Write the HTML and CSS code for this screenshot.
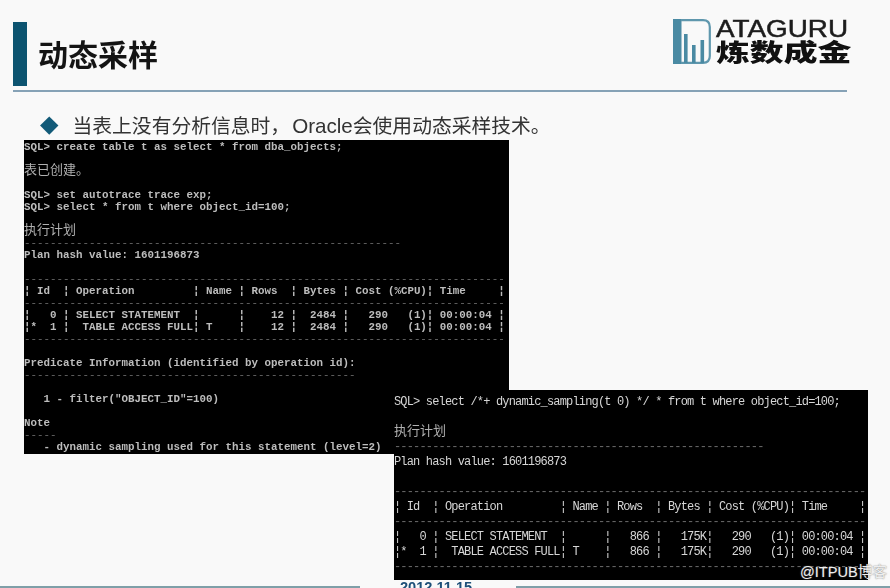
FILE: index.html
```html
<!DOCTYPE html>
<html lang="zh">
<head>
<meta charset="utf-8">
<title>动态采样</title>
<link rel="stylesheet" href="styles.css">
</head>
<body>
<main class="slide">
  <header class="head">
    <div class="accent"></div>
    <h1 class="title">动态采样</h1>
    <div class="logo">
      <svg class="logo-mark" width="38" height="45" viewBox="0 0 38 45">
        <rect x="0" y="0" width="8.5" height="45" fill="#4a8aa3"/>
        <path d="M8 1.2H30Q36.8 1.2 36.8 8V37Q36.8 43.8 30 43.8H8" fill="none" stroke="#5f97ad" stroke-width="2.2"/>
        <rect x="11" y="15" width="3.6" height="29" fill="#4a8aa3"/>
        <rect x="19" y="26" width="3.6" height="18" fill="#4a8aa3"/>
        <rect x="27.5" y="21" width="3.6" height="23" fill="#4a8aa3"/>
      </svg>
      <div class="logo-words">
        <span class="logo-en">ATAGURU</span>
        <span class="logo-cn">炼数成金</span>
      </div>
    </div>
  </header>
  <div class="rule"></div>
  <div class="point">
    <span class="diamond"></span>
    <p class="point-text">当表上没有分析信息时<span class="comma">，</span><span class="latin">Oracle</span>会使用动态采样技术。</p>
  </div>
  <pre class="term term-a">SQL&gt; create table t as select * from dba_objects;

<span class="cjk">表已创建。</span>

SQL&gt; set autotrace trace exp;
SQL&gt; select * from t where object_id=100;

<span class="cjk">执行计划</span>
<span class="dim">----------------------------------------------------------</span>
Plan hash value: 1601196873

<span class="dim">--------------------------------------------------------------------------</span>
¦ Id  ¦ Operation         ¦ Name ¦ Rows  ¦ Bytes ¦ Cost (%CPU)¦ Time     ¦
<span class="dim">--------------------------------------------------------------------------</span>
¦   0 ¦ SELECT STATEMENT  ¦      ¦    12 ¦  2484 ¦   290   (1)¦ 00:00:04 ¦
¦*  1 ¦  TABLE ACCESS FULL¦ T    ¦    12 ¦  2484 ¦   290   (1)¦ 00:00:04 ¦
<span class="dim">--------------------------------------------------------------------------</span>

Predicate Information (identified by operation id):
<span class="dim">---------------------------------------------------</span>

   1 - filter("OBJECT_ID"=100)

Note
<span class="dim">-----</span>
   - dynamic sampling used for this statement (level=2)</pre>
  <pre class="term term-b">SQL&gt; select /*+ dynamic_sampling(t 0) */ * from t where object_id=100;

<span class="cjk">执行计划</span>
<span class="dim">----------------------------------------------------------</span>
Plan hash value: 1601196873

<span class="dim">--------------------------------------------------------------------------</span>
¦ Id  ¦ Operation         ¦ Name ¦ Rows  ¦ Bytes ¦ Cost (%CPU)¦ Time     ¦
<span class="dim">--------------------------------------------------------------------------</span>
¦   0 ¦ SELECT STATEMENT  ¦      ¦   866 ¦   175K¦   290   (1)¦ 00:00:04 ¦
¦*  1 ¦  TABLE ACCESS FULL¦ T    ¦   866 ¦   175K¦   290   (1)¦ 00:00:04 ¦
<span class="dim">--------------------------------------------------------------------------</span></pre>
  <footer class="foot">
    <div class="foot-line foot-left"></div>
    <span class="date">2012.11.15</span>
    <div class="foot-line foot-right"></div>
  </footer>
  <span class="mark">@ITPUB博客</span>
</main>
</body>
</html>
```
FILE: styles.css
```css
* { box-sizing: border-box; }
html, body { margin: 0; padding: 0; }
body { width: 890px; height: 588px; overflow: hidden; background: #f9f9f9; }

.slide {
  position: relative;
  width: 890px;
  height: 588px;
  overflow: hidden;
  display: flex;
  flex-direction: column;
  background: #f9f9f9;
  font-family: "Liberation Sans", "Noto Sans CJK SC", sans-serif;
}

.head {
  display: flex;
  align-items: flex-start;
  height: 85px;
  padding: 19px 39px 0 13px;
  filter: blur(0.4px);
}
.accent { width: 14px; height: 64px; margin-top: 3px; background: #0c5470; }
.title {
  margin: 16px 0 0 11px;
  font: 700 30px/36px "Noto Sans CJK SC", sans-serif;
  color: #141414;
}
.logo { display: flex; gap: 5px; margin-left: auto; }
.logo-mark { flex: none; }
.logo-words { display: flex; flex-direction: column; width: 135px; }
.logo-en {
  display: block;
  font: 400 24px/20px "Liberation Sans", sans-serif;
  color: #1c1c1c;
  -webkit-text-stroke: 0.5px #1c1c1c;
  white-space: nowrap;
  transform: scaleX(1.16);
  transform-origin: left center;
}
.logo-cn {
  display: block;
  font: 900 24px/24px "Noto Sans CJK SC", sans-serif;
  color: #111;
  white-space: nowrap;
  transform: scaleX(1.41);
  transform-origin: left center;
}

.rule { height: 2px; margin: 5px 43px 0 13px; background: #86a2b6; }

.point {
  display: flex;
  align-items: center;
  height: 30px;
  margin: 18px 0 0 41px;
  gap: 15px;
  filter: blur(0.3px);
}
.diamond {
  width: 12.5px;
  height: 12.5px;
  margin: 0 2px;
  background: #125a78;
  transform: rotate(45deg);
}
.point-text {
  margin: 1px 0 0;
  font: 400 19.8px/30px "Liberation Sans", "Noto Sans CJK SC", sans-serif;
  color: #333;
  white-space: nowrap;
}
.comma { font-family: "Noto Sans CJK TC", sans-serif; margin-right: 2px; }
.latin { font-size: 20.6px; }

.term {
  margin: 0;
  background: #000;
  color: #bdbdbd;
  font-family: "Liberation Mono", "Noto Sans CJK SC", monospace;
  font-weight: 700;
  white-space: pre;
  overflow: hidden;
  filter: blur(0.55px);
}
.term-a {
  width: 485px;
  height: 314px;
  margin: 0 0 0 24px;
  padding-top: 1px;
  font-size: 10.83px;
  line-height: 12px;
  flex: none;
}
.term-b {
  position: absolute;
  left: 394px;
  top: 390px;
  width: 474px;
  height: 190px;
  padding-top: 5px;
  font-size: 12px;
  letter-spacing: -0.83px;
  line-height: 15px;
  font-weight: 400;
  color: #d6d6d6;
  z-index: 2;
}
.cjk {
  font-family: "Noto Sans CJK SC", sans-serif;
  font-size: 13px;
  font-weight: 400;
  line-height: 0;
  letter-spacing: 0;
  color: #b0b0b0;
}
.dim { color: #6a6a6a; font-weight: 400; }

.foot {
  position: absolute;
  left: 0;
  right: 0;
  bottom: 0;
  height: 2px;
  display: flex;
  justify-content: space-between;
}
.foot-line { height: 2px; background: #7f9fa8; }
.foot-left { width: 360px; }
.foot-right { width: 374px; }
.date {
  position: absolute;
  left: 400px;
  bottom: -7px;
  font: 700 14.6px/16px "Liberation Sans", sans-serif;
  color: #1d4f78;
  filter: blur(0.3px);
}

.mark {
  position: absolute;
  left: 800px;
  top: 564px;
  z-index: 3;
  font: 400 14.6px/16px "Liberation Sans", "Noto Sans CJK SC", sans-serif;
  color: #eee;
  text-shadow: 0 0 1.5px #666;
  white-space: nowrap;
}
```
